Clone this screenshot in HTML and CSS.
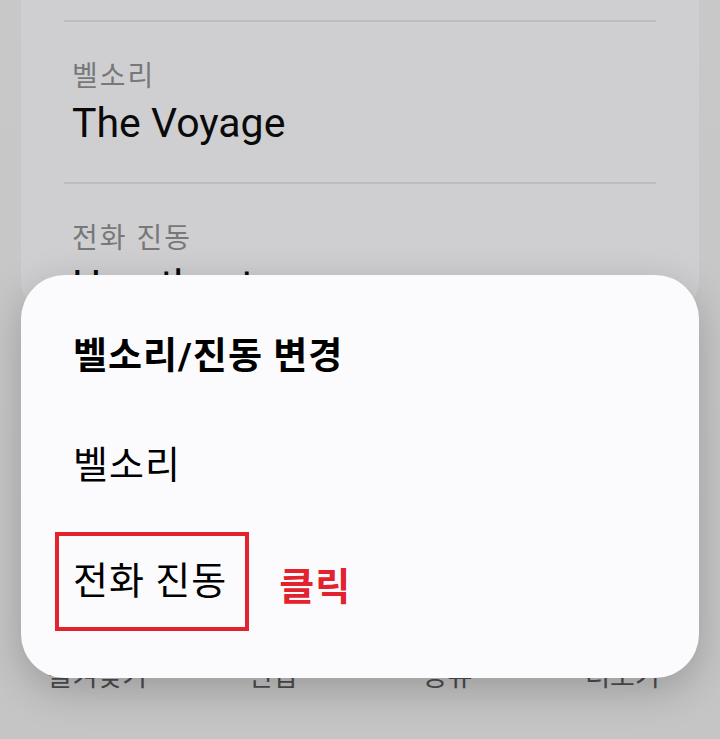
FILE: index.html
```html
<!DOCTYPE html>
<html lang="ko">
<head>
<meta charset="utf-8">
<link rel="stylesheet" href="styles.css">
</head>
<body>
<div class="page">
  <div class="card">
    <div class="row">
      <div class="label">벨소리</div>
      <div class="value">The Voyage</div>
    </div>
    <div class="row">
      <div class="label">전화 진동</div>
      <div class="value">Heartbeat</div>
    </div>
  </div>
  <nav class="nav">
    <span>즐겨찾기</span>
    <span>편집</span>
    <span>공유</span>
    <span>더보기</span>
  </nav>
</div>

<div class="dialog">
  <div class="title">벨소리/진동 변경</div>
  <div class="item">벨소리</div>
  <div class="item-row">
    <div class="item boxed">전화 진동</div>
    <div class="click">클릭</div>
  </div>
</div>
</body>
</html>
```

FILE: styles.css
```css
* { box-sizing: border-box; }
html, body {
  margin: 0;
  padding: 0;
  width: 720px;
  height: 739px;
  overflow: hidden;
}
body {
  background: #c5c5c5;
  font-family: Roboto, "Noto Sans CJK KR", sans-serif;
  position: relative;
}
.page {
  height: 739px;
  display: flex;
  flex-direction: column;
  background: linear-gradient(#c8c8c8, #c5c5c5);
}
.card {
  margin: 0 21px;
  background: #cfcfd1;
  border-radius: 0 0 40px 40px;
  padding: 20px 43px 0;
  height: 320px;
}
.row {
  border-top: 2px solid #bdbdbf;
  padding: 36px 8px 35px;
}
.label {
  font-size: 28px;
  letter-spacing: 2px;
  line-height: 34px;
  color: #78787a;
  margin-top: 2px;
  margin-bottom: -2px;
}
.value {
  margin-top: 7px;
  font-size: 41px;
  line-height: 48px;
  color: #0a0a0a;
}
.nav {
  margin-top: auto;
  padding: 0 10px 45px;
  display: grid;
  grid-template-columns: repeat(4, 1fr);
  text-align: center;
  font-size: 27px;
  line-height: 34px;
  color: #4d4d4f;
}
.dialog {
  position: absolute;
  left: 21px;
  top: 275px;
  width: 678px;
  height: 403px;
  background: #fbfbfd;
  border-radius: 44px;
  box-shadow: 0 12px 40px rgba(0, 0, 0, 0.22);
  padding: 62px 34px 0;
  display: flex;
  flex-direction: column;
  color: #000;
}
.title {
  padding-left: 18px;
  font-size: 37px;
  letter-spacing: 1px;
  line-height: 40px;
  font-weight: 700;
}
.item {
  padding-left: 18px;
  margin-top: 68px;
  font-size: 38px;
  letter-spacing: 1px;
  line-height: 40px;
}
.item-row {
  margin-top: 47px;
  display: flex;
  align-items: center;
  gap: 30px;
}
.item.boxed {
  margin-top: 0;
  border: 4px solid #e3222d;
  padding: 25px 18px 26px 14px;
}
.click {
  margin-top: 10px;
  color: #e3222d;
  font-size: 38px;
  letter-spacing: 1px;
  line-height: 40px;
  font-weight: 700;
}
```
